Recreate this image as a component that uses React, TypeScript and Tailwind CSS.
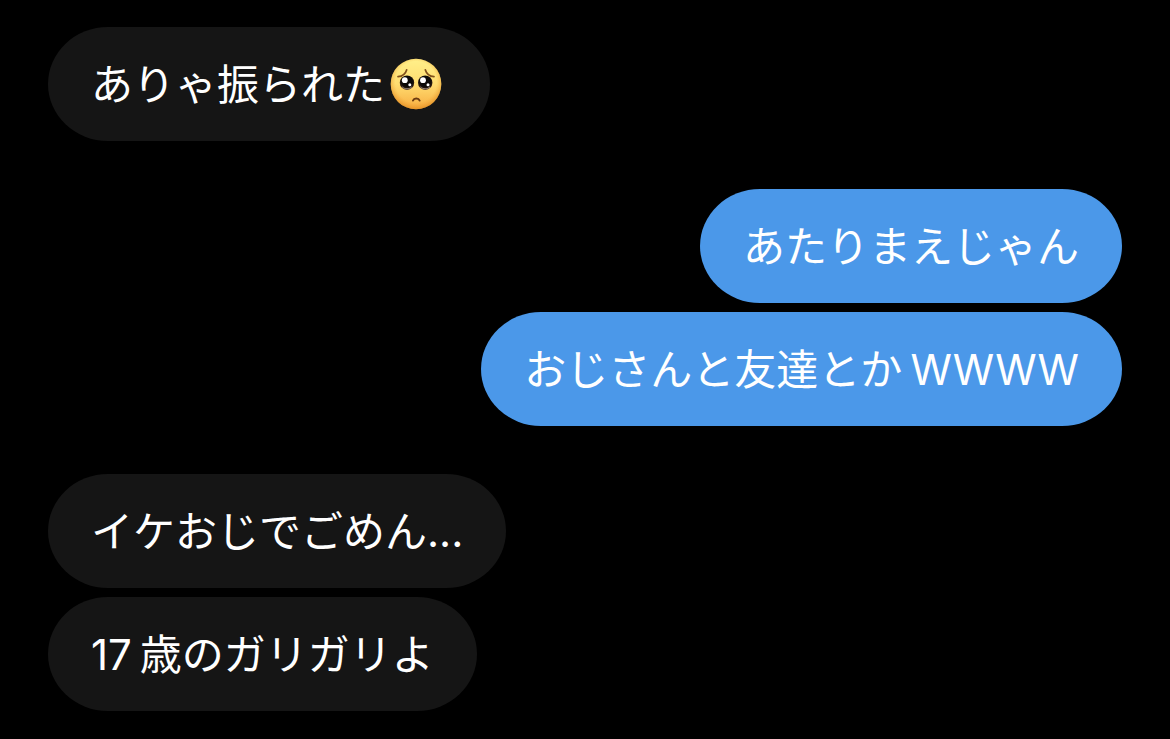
import clsx from 'clsx';

interface Message {
  id: number;
  before?: string;
  text: string;
  after?: string;
  pleading?: boolean;
}

interface MessageGroup {
  id: number;
  mine: boolean;
  messages: Message[];
}

const groups: MessageGroup[] = [
  { id: 1, mine: false, messages: [{ id: 1, text: 'ありゃ振られた', pleading: true }] },
  {
    id: 2,
    mine: true,
    messages: [
      { id: 2, text: 'あたりまえじゃん' },
      { id: 3, text: 'おじさんと友達とか', after: 'WWWW' },
    ],
  },
  {
    id: 3,
    mine: false,
    messages: [
      { id: 4, text: 'イケおじでごめん...' },
      { id: 5, before: '17', text: '歳のガリガリよ' },
    ],
  },
];

function PleadingFace() {
  return (
    <svg viewBox="0 0 54 54" className="mx-1 size-[54px] shrink-0" role="img" aria-label="🥺">
      <defs>
        <linearGradient id="skin" x1="0" y1="0" x2="0" y2="1">
          <stop offset="0" stopColor="#fff08a" />
          <stop offset="0.5" stopColor="#ffdc70" />
          <stop offset="1" stopColor="#f7ac40" />
        </linearGradient>
        <radialGradient id="rim" cx="50%" cy="46%" r="54%">
          <stop offset="0.75" stopColor="#f0a030" stopOpacity="0" />
          <stop offset="1" stopColor="#d98218" stopOpacity="0.6" />
        </radialGradient>
        <radialGradient id="iris" cx="50%" cy="40%" r="60%">
          <stop offset="0.6" stopColor="#0c0908" />
          <stop offset="1" stopColor="#3d2415" />
        </radialGradient>
      </defs>
      <circle cx="27" cy="26" r="25.3" fill="url(#skin)" />
      <circle cx="27" cy="26" r="25.3" fill="url(#rim)" />
      <path
        d="M9 18.700C13 18.500 16.500 16 17.700 11.800M45 18.700C41 18.500 37.500 16 36.300 11.800"
        fill="none"
        stroke="#80501b"
        strokeWidth="1.700"
        strokeLinecap="round"
      />
      <circle cx="18" cy="24.700" r="7.200" fill="url(#iris)" />
      <circle cx="36.200" cy="24.700" r="7.200" fill="url(#iris)" />
      <circle cx="15.800" cy="22.200" r="2.900" fill="#fff" />
      <circle cx="34" cy="22.200" r="2.900" fill="#fff" />
      <circle cx="20.800" cy="26.800" r="1.500" fill="#fff" />
      <circle cx="39" cy="26.800" r="1.500" fill="#fff" />
      <path
        d="M13.500 29.200c2.500 2.300 6.500 2.300 9 0M31.700 29.200c2.500 2.300 6.500 2.300 9 0"
        fill="none"
        stroke="#a8978a"
        strokeWidth="1"
        strokeLinecap="round"
      />
      <path
        d="M24 42.500c1-2.600 5.600-2.600 6.600 0"
        fill="none"
        stroke="#6b3a10"
        strokeWidth="2"
        strokeLinecap="round"
      />
    </svg>
  );
}

function Bubble({ message, mine }: { message: Message; mine: boolean }) {
  return (
    <div
      className={clsx(
        'flex min-h-[114px] items-center rounded-[60px/57px] px-[43px] pt-[2px] text-[42px] leading-none text-white',
        mine ? 'bg-[#4b98e9]' : 'bg-[#151515]',
      )}
    >
      <p className="whitespace-nowrap">
        {message.before && <span className="mr-2">{message.before}</span>}
        {message.text}
        {message.after && <span className="ml-2">{message.after}</span>}
      </p>
      {message.pleading && <PleadingFace />}
    </div>
  );
}

export default function App() {
  return (
    <main className="flex min-h-screen flex-col gap-12 bg-black px-12 pt-[27px] pb-7 font-['Inter','Noto_Sans_CJK_JP',sans-serif]">
      {groups.map((group) => (
        <section key={group.id} className={clsx('flex flex-col gap-[9px]', group.mine ? 'items-end' : 'items-start')}>
          {group.messages.map((message) => (
            <Bubble key={message.id} message={message} mine={group.mine} />
          ))}
        </section>
      ))}
    </main>
  );
}
